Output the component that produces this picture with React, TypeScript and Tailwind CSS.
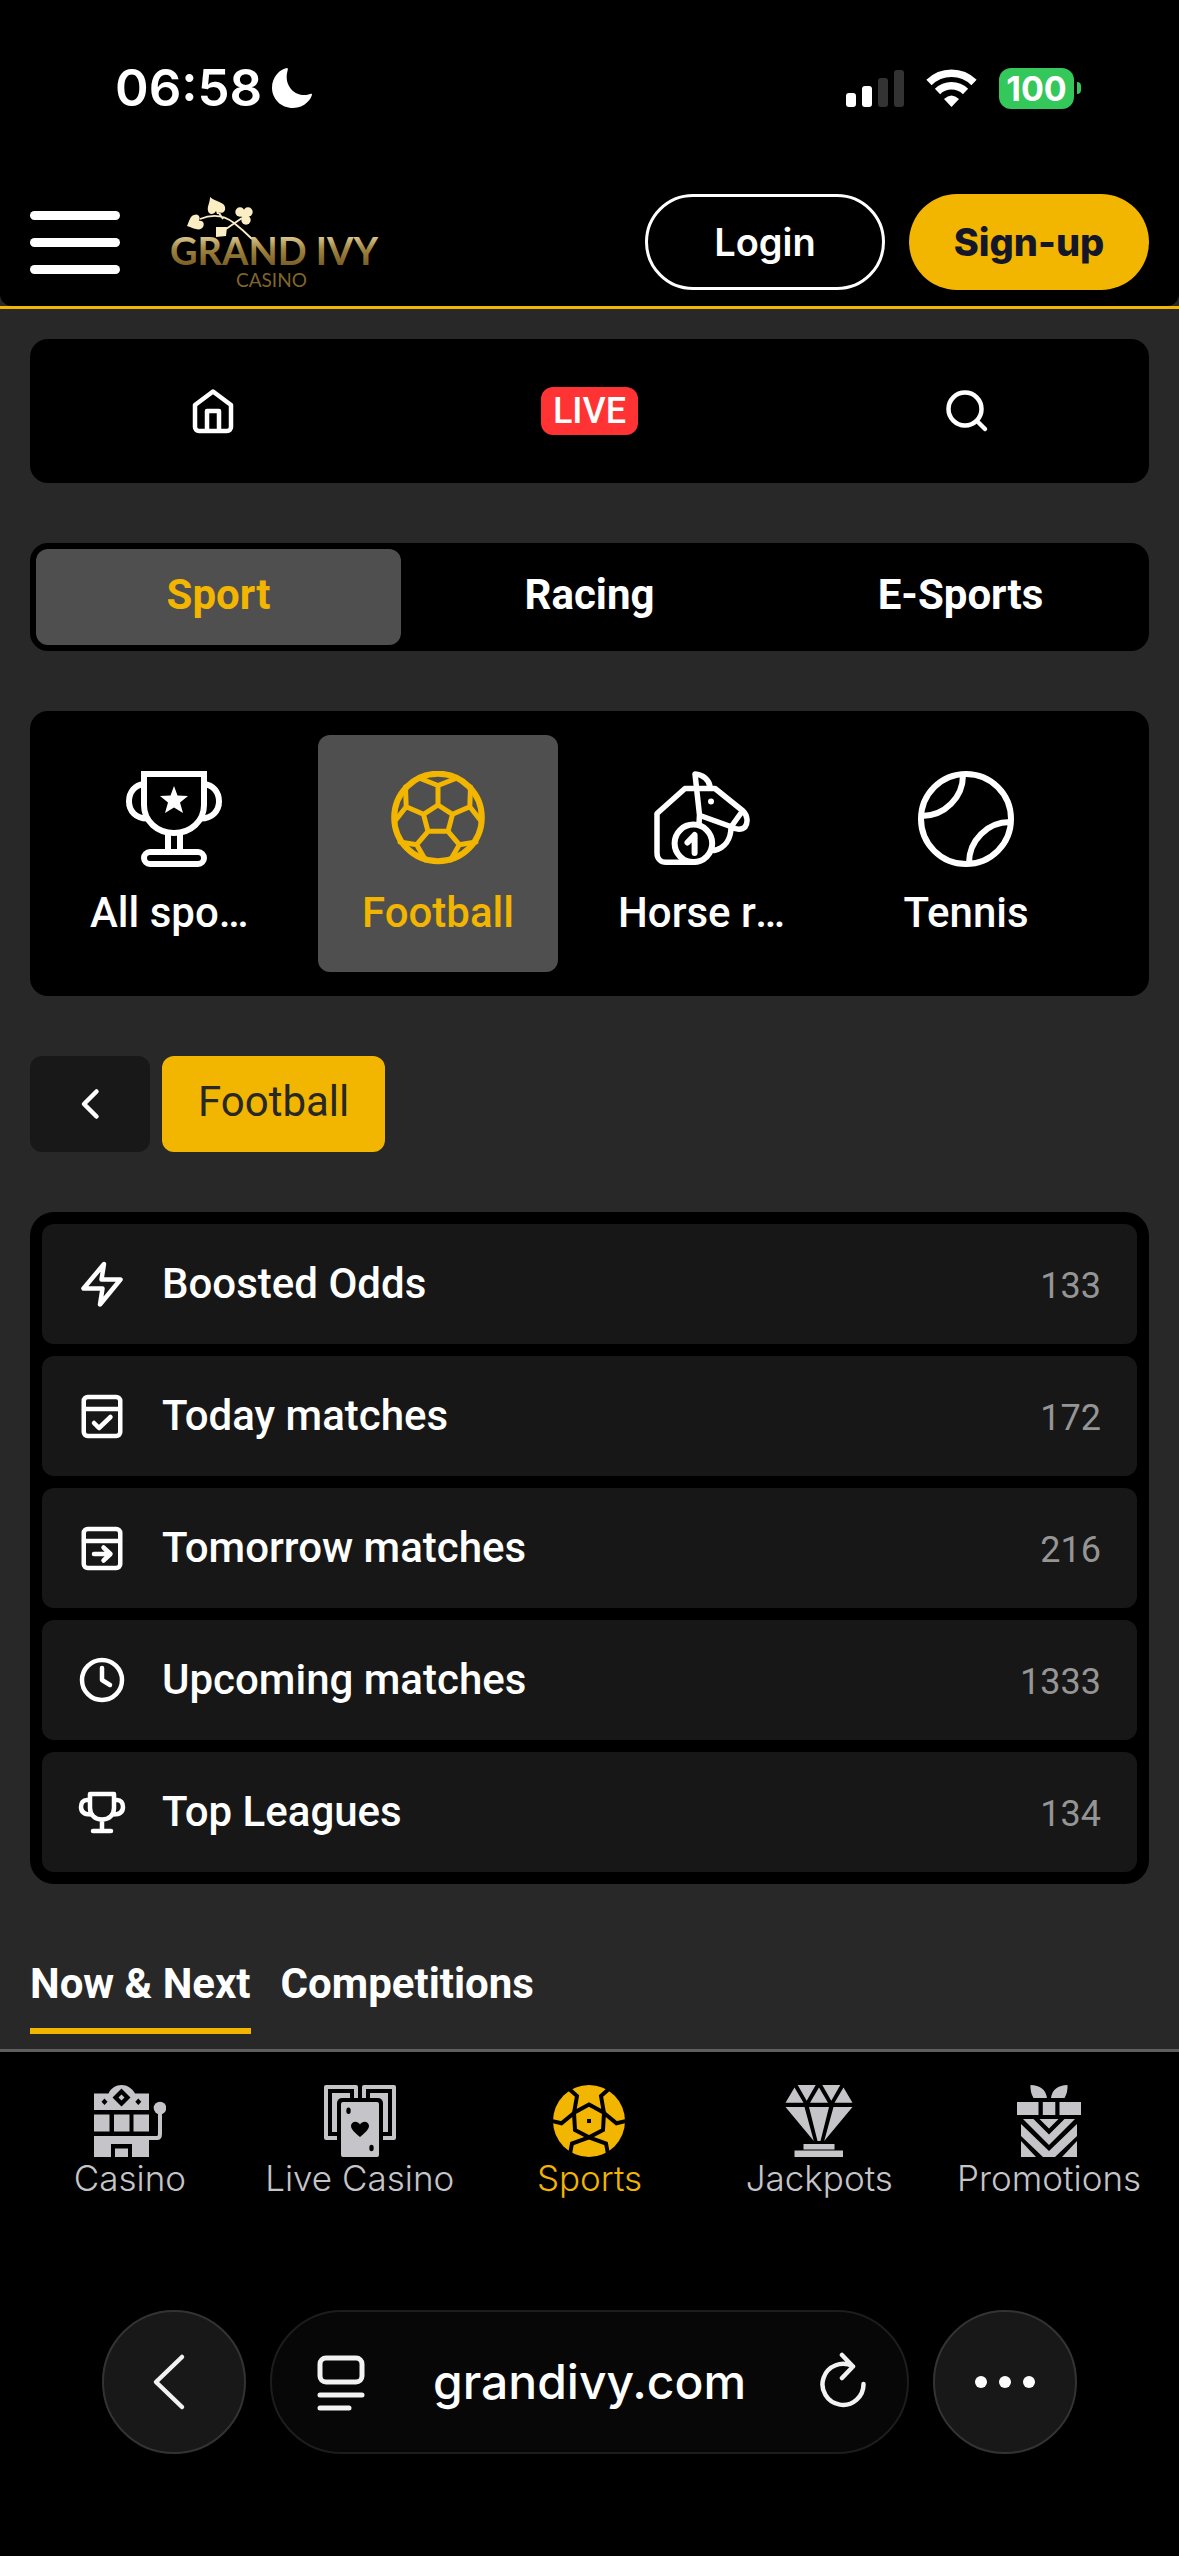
import type { ReactNode } from 'react';

const stroke = {
  fill: 'none',
  stroke: 'currentColor',
  strokeLinecap: 'round',
  strokeLinejoin: 'round',
} as const;

function LineIcon({ children }: { children: ReactNode }) {
  return (
    <svg aria-hidden="true" className="size-12 shrink-0" viewBox="0 0 48 48" {...stroke} strokeWidth={4.5}>
      {children}
    </svg>
  );
}

function SportIcon({ children }: { children: ReactNode }) {
  return (
    <svg aria-hidden="true" className="size-24 shrink-0" viewBox="0 0 96 96" {...stroke} strokeWidth={6}>
      {children}
    </svg>
  );
}

function NavIcon({ children }: { children: ReactNode }) {
  return (
    <svg aria-hidden="true" className="size-18 shrink-0" fill="currentColor" viewBox="0 0 72 72">
      {children}
    </svg>
  );
}

const sports = [
  {
    label: 'All sports',
    active: false,
    icon: (
      <SportIcon>
        <path strokeLinejoin="miter" d="M18 3H78V34C78 50 65 62 48 62S18 50 18 34Z" />
        <path strokeLinecap="butt" d="M18 13C9 14 3 21 3 30.500C3 40 10 47.500 21 47.500M78 13C87 14 93 21 93 30.500C93 40 86 47.500 75 47.500M42 62V80M54 62V80" />
        <rect height="12" rx="6" width="60" x="18" y="81" />
        <path fill="currentColor" stroke="none" d="M48 15L51.500 24.500L62 25L54 31.500L57 42L48 36.500L39 42L42 31.500L34 25L44.500 24.500Z" />
      </SportIcon>
    ),
  },
  {
    label: 'Football',
    active: true,
    icon: (
      <SportIcon>
        <circle cx="48" cy="46.500" r="43.800" />
        <path
          strokeWidth={5}
          d="M48 34L62.500 43.300L58 60.300H38L33.500 43.300ZM48 34V14.500M29 7L48 14.500L67 7M62.500 43.300L79.800 35.700M80.500 16L79.800 35.700L91 50M33.500 43.300L16.200 35.700M15.500 16L16.200 35.700L5 50M58 60.300L69.300 73.700M86 71L69.300 73.700L60.500 89M38 60.300L26.700 73.700M10 71L26.700 73.700L35.500 89"
        />
      </SportIcon>
    ),
  },
  {
    label: 'Horse racing',
    active: false,
    icon: (
      <SportIcon>
        <path strokeWidth={5.500} d="M56 16C55.500 9 49 3.500 41 3L45.500 44L45 53" />
        <path strokeWidth={5.500} d="M40 91.300H12C7 91.300 3 88 3 82V42.500L31 17.500H61L89 40C94 45 94 52 91 56C88 59 82 59 78 56L46 44.500M87 42L77 56C77 68 71 77 60 79.500" />
        <circle cx="39.400" cy="72.300" r="18.800" />
        <path d="M33.500 71.500L40.600 64V82" />
        <circle cx="57" cy="30.500" fill="currentColor" r="3" stroke="none" />
      </SportIcon>
    ),
  },
  {
    label: 'Tennis',
    active: false,
    icon: (
      <SportIcon>
        <circle cx="48" cy="48" r="45" />
        <path d="M45 4A41 41 0 0 1 4 45M92 51A41 41 0 0 0 51 92" />
      </SportIcon>
    ),
  },
];

const lists = [
  {
    label: 'Boosted Odds',
    count: 133,
    icon: <path d="M26 4L5.500 28.500H24.500L22 44.500L42.500 19.500H23.500Z" />,
  },
  {
    label: 'Today matches',
    count: 172,
    icon: (
      <>
        <rect height="39" rx="4" width="36.500" x="5.750" y="5" />
        <path d="M6 17H42M16 31L21 36L32.500 25" />
      </>
    ),
  },
  {
    label: 'Tomorrow matches',
    count: 216,
    icon: (
      <>
        <rect height="39" rx="4" width="36.500" x="5.750" y="5" />
        <path d="M6 17H42M16 30H32M25.500 23.500L32.500 30L25.500 36.500" />
      </>
    ),
  },
  {
    label: 'Upcoming matches',
    count: 1333,
    icon: (
      <>
        <circle cx="24" cy="24" r="20" />
        <path d="M24 12V24L32 29" />
      </>
    ),
  },
  {
    label: 'Top Leagues',
    count: 134,
    icon: (
      <path d="M12 6H36V20C36 27 31 31.500 24 31.500S12 27 12 20ZM12 12H9C5 12 3 15 3 19C3 24 6 26.500 13 26.500M36 12H39C43 12 45 15 45 19C45 24 42 26.500 35 26.500M24 32V43M15 43H33" />
    ),
  },
];

const navItems = [
  {
    label: 'Casino',
    active: false,
    icon: (
      <NavIcon>
        <path d="M0 8.500H14.500C17 3 22 0 27.500 0S38 3 41 8.500H55V25H0ZM0 29.500H15.500V46.500H0ZM20 29.500H35.500V46.500H20ZM39.500 29.500H55V46.500H39.500ZM0 51H55V72H38V59H17V72H0ZM21 63.500H34V72H21Z" />
        <path d="M54 53H63Q66 53 66 49V26" fill="none" stroke="currentColor" strokeWidth="4" />
        <circle cx="66" cy="23" r="6.300" />
        <path d="M27.500 3.500L36.500 12.500L27.500 21.500L18.500 12.500ZM10.500 13.500L13.500 16.700L10.500 20L7.500 16.700ZM44.300 13.500L47.300 16.700L44.300 20L41.300 16.700Z" fill="#000" />
        <path d="M27.500 9.500L30.500 12.500L27.500 15.500L24.500 12.500Z" />
      </NavIcon>
    ),
  },
  {
    label: 'Live Casino',
    active: false,
    icon: (
      <NavIcon>
        <rect height="55" rx="2" width="34" />
        <rect height="55" rx="2" width="34" x="38" />
        <path d="M6 6H28V49H6ZM44 6H66V49H44Z" fill="none" stroke="#000" strokeWidth="4" />
        <rect fill="#000" height="60" rx="5" width="46" x="13" y="13" />
        <rect height="55" rx="2" width="38" x="17" y="17" />
        <path d="M36 52C31 47.500 27 44.500 27 41C27 36 33.500 35 36 39.500C38.500 35 45 36 45 41C45 44.500 41 47.500 36 52Z" fill="#000" />
        <ellipse cx="24.500" cy="25.700" fill="#000" rx="2.200" ry="3.200" />
        <ellipse cx="47.500" cy="63" fill="#000" rx="2.200" ry="3.200" />
      </NavIcon>
    ),
  },
  {
    label: 'Sports',
    active: true,
    icon: (
      <NavIcon>
        <circle cx="36" cy="36" r="36" />
        <path
          d="M36 19.500L51 27.700L50 45L36 52.300L22 45L21 27.700ZM51 28L48 11L57 3M51 28L63.500 38.300L73 36M21 28L24 11L15 3M21 28L8.500 38.300L-1 36M36 52.300L53 58.500L55 69M50 45L36 52.300L19 58.500L17 69"
          fill="none"
          stroke="#000"
          strokeWidth="4"
        />
        <rect fill="#000" height="4" width="4" x="34" y="34" />
      </NavIcon>
    ),
  },
  {
    label: 'Jackpots',
    active: false,
    icon: (
      <NavIcon>
        <path d="M11.500 2.500L20.500 17.700H2.500ZM14.700 0H32.700L23.700 15.700ZM36 2.500L45 17.700H27ZM39.300 0H57.300L48.300 15.700ZM60.500 2.500L69.500 17.700H51.500ZM2.500 22H21.500L30.800 56ZM26 22H46L37.500 56H34.500ZM50.500 22H69.500L41.200 56ZM20.500 59H51.500V64.500H20.500ZM11.500 65.500H60V72H11.500Z" />
      </NavIcon>
    ),
  },
  {
    label: 'Promotions',
    active: false,
    icon: (
      <NavIcon>
        <path d="M17.500 0C27 0 33 5 34 13H20.500Q17 7 17.500 0ZM54.500 0C45 0 39 5 38 13H51.500Q55 7 54.500 0ZM4 17H25.500V30H4ZM29.800 17H42.300V30H29.800ZM46.500 17H68V30H46.500ZM26.500 34H45.500L36 43.500ZM10 34H20.500L36 49.500L51.500 34H62L36 60ZM8 39L36 66L64 39V51L42 72H30L8 51ZM8 56L23 72H8ZM64 56L49 72H64Z" />
      </NavIcon>
    ),
  },
];

function StatusBar() {
  return (
    <div className="flex h-44 items-start justify-between bg-black pt-[67px] pr-[98px] pl-[115px] text-white">
      <div className="flex items-center gap-[10px]">
        <span className="text-[51px] leading-[42px] font-semibold">06:58</span>
        <svg aria-hidden="true" className="size-10" fill="currentColor" viewBox="0 0 40 40">
          <path d="M15 0C16 0 16 1 15.500 3C12 15 20 28 34 27C37 26.500 39 25 40 26C40 30 33 40 21 40C9 40 0 31 0 19.500C0 9 8 1 15 0Z" />
        </svg>
      </div>
      <div className="flex h-[42px] items-center gap-[22px]">
        <svg aria-hidden="true" className="h-[38px] w-[58px]" fill="currentColor" viewBox="0 0 58 38">
          <rect height="14" rx="3" width="10" y="24" />
          <rect height="21" rx="3" width="10" x="16" y="17" />
          <rect fill="#333" height="29" rx="3" width="10" x="32" y="9" />
          <rect fill="#333" height="37" rx="3" width="10" x="48" y="1" />
        </svg>
        <svg aria-hidden="true" className="h-[38px] w-[51px]" viewBox="0 0 51 38">
          <path d="M3 13.500A32 32 0 0 1 48 13.500" fill="none" stroke="currentColor" strokeWidth="7.500" />
          <path d="M11.500 22.500A20 20 0 0 1 39.500 22.500" fill="none" stroke="currentColor" strokeWidth="7.500" />
          <path d="M18 30Q25.500 23 33 30L25.500 38Z" fill="currentColor" />
        </svg>
        <div className="flex items-center gap-[3px]">
          <span className="flex h-[41px] w-[75px] items-center justify-center rounded-[12px] bg-[#34c759] text-[34px] font-bold">
            100
          </span>
          <span className="h-3 w-1 rounded-r-full bg-[#34c759]" />
        </div>
      </div>
    </div>
  );
}

function Logo() {
  return (
    <a aria-label="Grand Ivy Casino" className="ml-[50px] block" href="#home">
      <svg className="h-24 w-[212px]" viewBox="0 0 212 96">
        <defs>
          <linearGradient gradientUnits="userSpaceOnUse" id="gold" x1="0" x2="0" y1="40" y2="70">
            <stop offset="0" stopColor="#e6d5a2" />
            <stop offset="0.5" stopColor="#a08440" />
            <stop offset="1" stopColor="#7d6128" />
          </linearGradient>
        </defs>
        <g fill="none" stroke="#fbeec4" strokeWidth="1.800">
          <path d="M30 25Q49 17 64 29Q73 36 82 45M49 19L53 25M72 24L56 35" />
        </g>
        <g fill="#fbeec4">
          <path d="M40 3C46 8 54 8 55 13C56 18 52 20 48 18L51 20L47 20L46 17C44 21 39 21 38 17C37 12 40 9 40 3Z" />
          <path d="M17 32C19 28 20 22 24 21C28 19 31 23 29 27C33 26 35 30 33 33C30 38 23 34 17 32Z" />
          <path d="M46 33H57L56 42L46 43Z" />
          <circle cx="70" cy="18" r="4.700" />
          <circle cx="78" cy="18" r="4.700" />
          <circle cx="76" cy="26" r="4.700" />
          <circle cx="74" cy="21" r="3" />
        </g>
        <text fill="url(#gold)" fontFamily="Lato, sans-serif" fontSize="38" fontWeight="700" x="0" y="71">
          GRAND IVY
        </text>
        <text fill="#80652c" fontFamily="Lato, sans-serif" fontSize="19" x="66" y="93">
          CASINO
        </text>
      </svg>
    </a>
  );
}

function Header() {
  return (
    <header className="border-b-3 border-[#f2b500] bg-[#282828]">
      <div className="flex items-center rounded-b-[12px] bg-black px-[30px] pt-[18px] pb-4 text-white">
        <button aria-label="Menu" className="flex w-[90px] flex-col gap-[18px]" type="button">
          <span className="h-[9px] w-full rounded-full bg-white" />
          <span className="h-[9px] w-full rounded-full bg-white" />
          <span className="h-[9px] w-full rounded-full bg-white" />
        </button>
        <Logo />
        <div className="ml-auto flex gap-6 text-[38px]">
          <button className="h-24 w-60 rounded-full border-3 border-white font-semibold" type="button">
            Login
          </button>
          <button className="h-24 w-60 rounded-full bg-[#f2b500] font-extrabold text-[#14172a]" type="button">
            Sign-up
          </button>
        </div>
      </div>
    </header>
  );
}

function BrowserBar() {
  return (
    <div className="mt-auto flex gap-6 px-[102px] pb-[102px] text-[#f2f2f2]">
      <button aria-label="Back" className="flex size-36 items-center justify-center rounded-full border-2 border-[#333] bg-[#181818]" type="button">
        <svg className="size-15" viewBox="0 0 60 60" {...stroke} strokeWidth={4.500}>
          <path d="M38 5L12 30L38 55" />
        </svg>
      </button>
      <div className="flex h-36 flex-1 items-center justify-between rounded-full border-2 border-[#1d1d1d] bg-[#070707] px-9">
        <button aria-label="Page options" type="button">
          <svg className="size-15" viewBox="0 0 60 60" {...stroke} strokeWidth={5}>
            <rect height="24" rx="6" width="42" x="12" y="6" />
            <path d="M12 43H54M12 56H41" />
          </svg>
        </button>
        <span className="text-[48px] font-medium text-white">grandivy.com</span>
        <button aria-label="Reload" type="button">
          <svg className="size-15" viewBox="0 0 60 60" {...stroke} strokeWidth={4.500}>
            <path d="M42 14.500A20.500 20.500 0 1 0 52.500 32M31 3L42 14.500L31 26" />
          </svg>
        </button>
      </div>
      <button aria-label="More" className="flex size-36 items-center justify-center gap-3 rounded-full border-2 border-[#333] bg-[#181818]" type="button">
        <span className="size-3 rounded-full bg-white" />
        <span className="size-3 rounded-full bg-white" />
        <span className="size-3 rounded-full bg-white" />
      </button>
    </div>
  );
}

export default function App() {
  return (
    <div className="flex min-h-screen flex-col bg-black font-['Inter',sans-serif]">
      <StatusBar />
      <Header />

      <main className="flex flex-col gap-15 bg-[#282828] px-[30px] pt-[30px] pb-[15px] font-['Roboto',sans-serif] text-[42px] leading-12 text-white">
        <div className="grid h-36 grid-cols-3 items-center justify-items-center gap-3 rounded-[18px] bg-black">
          <button aria-label="Home" type="button">
            <LineIcon>
              <path d="M24 4.500L42 18V40A4 4 0 0 1 38 44H10A4 4 0 0 1 6 40V18ZM18 44V24H30V44" />
            </LineIcon>
          </button>
          <button className="h-12 rounded-[12px] bg-[#ff3333] px-3 text-[36px] font-medium" type="button">
            LIVE
          </button>
          <button aria-label="Search" type="button">
            <LineIcon>
              <circle cx="22" cy="22" r="16.500" />
              <path d="M34 34L42 42" />
            </LineIcon>
          </button>
        </div>

        <div className="grid grid-cols-3 gap-[6px] rounded-[18px] bg-black p-[6px] font-bold">
          <button className="h-24 rounded-[12px] bg-[#4f4f4f] pb-1 text-[#f2b500]" type="button">Sport</button>
          <button className="h-24 rounded-[12px] pb-1" type="button">Racing</button>
          <button className="h-24 rounded-[12px] pb-1" type="button">E-Sports</button>
        </div>

        <div className="flex gap-6 overflow-hidden rounded-[18px] bg-black p-6 font-medium">
          {sports.map((sport) => (
            <button
              key={sport.label}
              className={`flex w-60 flex-col items-center gap-[22px] rounded-[12px] px-9 pt-9 pb-[35px] ${
                sport.active ? 'bg-[#4f4f4f] text-[#f2b500]' : ''
              }`}
              type="button"
            >
              {sport.icon}
              <span className="w-full truncate">{sport.label}</span>
            </button>
          ))}
        </div>

        <div className="flex gap-3">
          <button aria-label="Back to sports" className="flex h-24 w-30 items-center justify-center rounded-[12px] bg-[#181818]" type="button">
            <LineIcon>
              <path d="M30.500 11.500L18 24L30.500 36.500" />
            </LineIcon>
          </button>
          <button className="h-24 rounded-[12px] bg-[#f2b500] px-9 pb-1 text-[#282828]" type="button">
            Football
          </button>
        </div>

        <ul className="flex flex-col gap-3 rounded-[24px] bg-black p-3">
          {lists.map((item) => (
            <li key={item.label}>
              <a className="flex h-30 items-center gap-9 rounded-[12px] bg-[#171717] px-9" href="#matches">
                <LineIcon>{item.icon}</LineIcon>
                <span className="font-medium">{item.label}</span>
                <span className="ml-auto pt-1 text-[36px] text-[#959595]">{item.count}</span>
              </a>
            </li>
          ))}
        </ul>

        <div className="flex gap-[30px] font-bold">
          <button className="border-b-6 border-[#f2b500] pt-4 pb-[20px]" type="button">Now &amp; Next</button>
          <button className="border-b-6 border-transparent pt-4 pb-[20px]" type="button">Competitions</button>
        </div>
      </main>

      <nav className="grid grid-cols-5 border-t-3 border-[#5f5f5f] bg-black px-[15px] pt-[33px] pb-10 text-[35px] leading-[42px] font-light">
        {navItems.map((item) => (
          <a
            key={item.label}
            className={`flex flex-col items-center ${item.active ? 'text-[#f2b500]' : 'text-[#c5c5c9]'}`}
            href="#section"
          >
            {item.icon}
            <span>{item.label}</span>
          </a>
        ))}
      </nav>

      <BrowserBar />
    </div>
  );
}
